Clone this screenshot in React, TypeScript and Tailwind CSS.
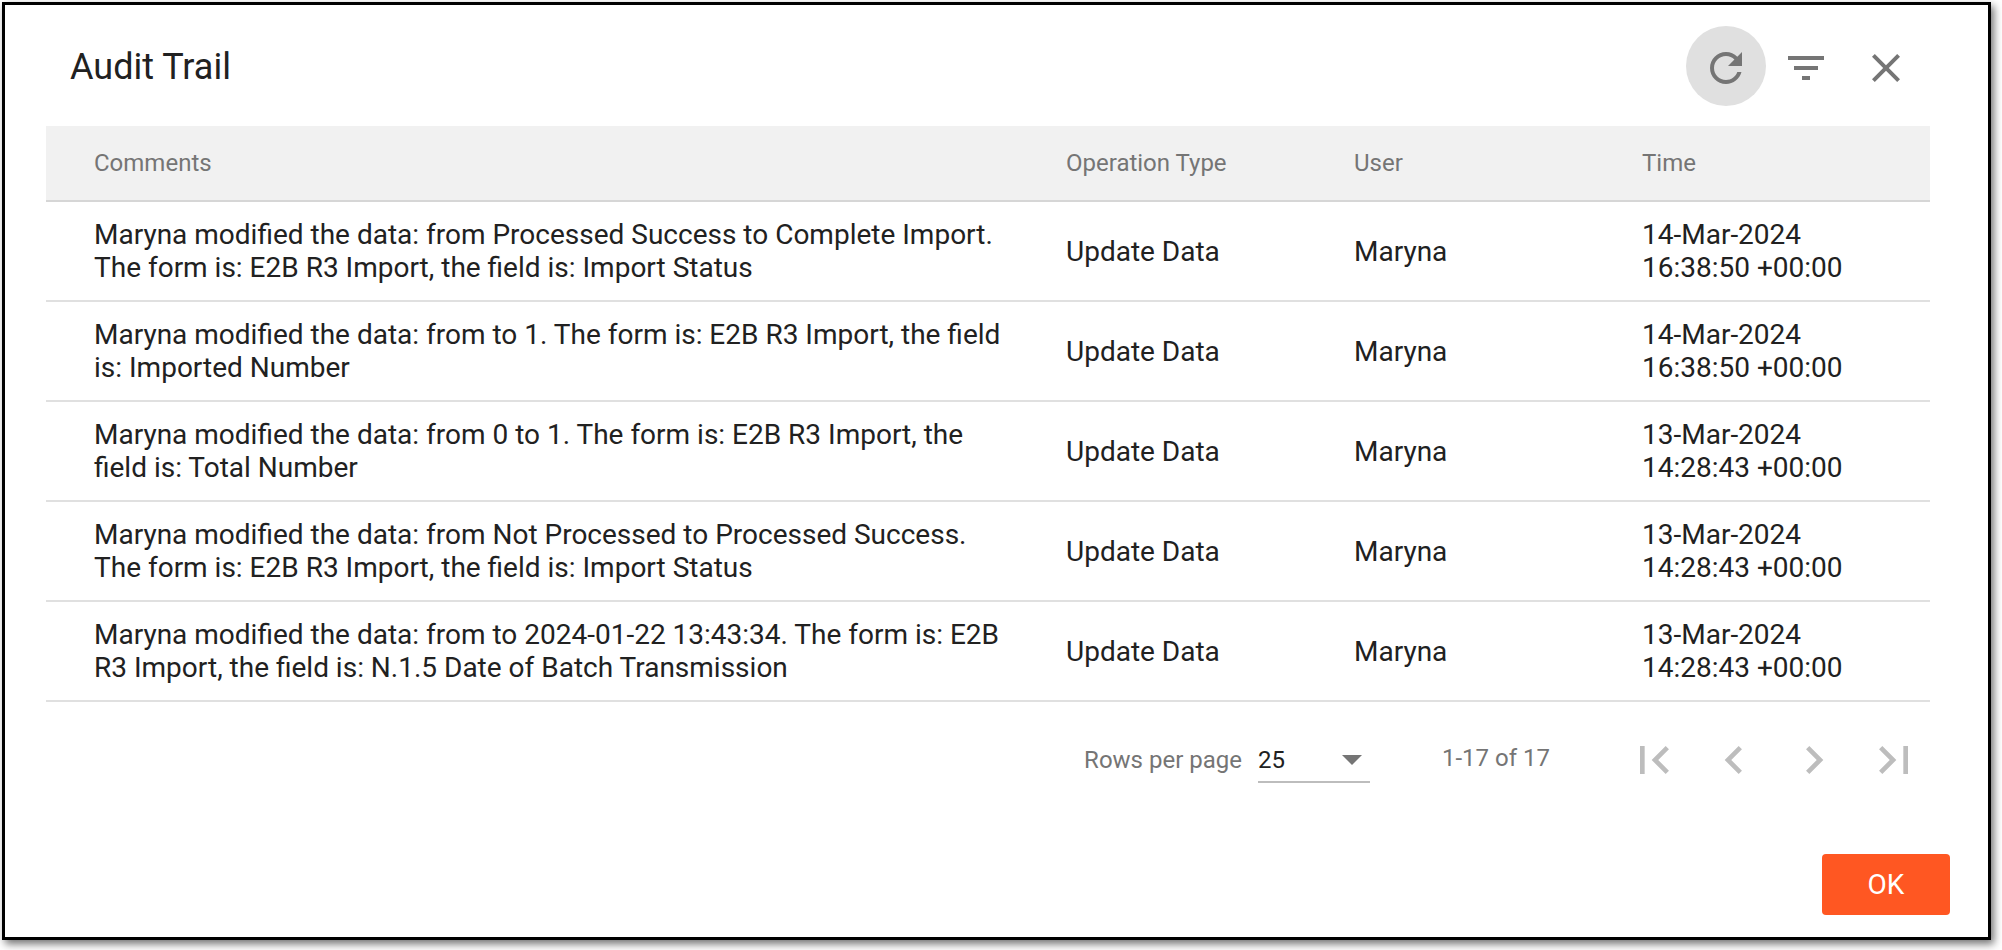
const rows = [
  {
    comment: "Maryna modified the data: from Processed Success to Complete Import. The form is: E2B R3 Import, the field is: Import Status",
    date: "14-Mar-2024",
    time: "16:38:50 +00:00",
  },
  {
    comment: "Maryna modified the data: from to 1. The form is: E2B R3 Import, the field is: Imported Number",
    date: "14-Mar-2024",
    time: "16:38:50 +00:00",
  },
  {
    comment: "Maryna modified the data: from 0 to 1. The form is: E2B R3 Import, the field is: Total Number",
    date: "13-Mar-2024",
    time: "14:28:43 +00:00",
  },
  {
    comment: "Maryna modified the data: from Not Processed to Processed Success. The form is: E2B R3 Import, the field is: Import Status",
    date: "13-Mar-2024",
    time: "14:28:43 +00:00",
  },
  {
    comment: "Maryna modified the data: from to 2024-01-22 13:43:34. The form is: E2B R3 Import, the field is: N.1.5 Date of Batch Transmission",
    date: "13-Mar-2024",
    time: "14:28:43 +00:00",
  },
];

const Icon = ({ d, size, className }: { d: string; size: number; className?: string }) => (
  <svg width={size} height={size} viewBox="0 0 24 24" fill="currentColor" className={className}>
    <path d={d} />
  </svg>
);

const pagerIcons = [
  "M18.41 16.59L13.82 12l4.59-4.59L17 6l-6 6 6 6zM6 6h2v12H6z",
  "M15.41 7.41L14 6l-6 6 6 6 1.41-1.41L10.83 12z",
  "M10 6L8.59 7.41 13.17 12l-4.58 4.59L10 18l6-6z",
  "M5.59 7.41L10.18 12l-4.59 4.59L7 18l6-6-6-6zM16 6h2v12h-2z",
];

export default function App() {
  return (
    <div className="h-[950px] w-[2002px] bg-white pl-[2px] pt-[2px] font-['Roboto',sans-serif]">
      <div className="flex h-[938px] w-[1989px] flex-col border-[3px] border-black bg-white shadow-[3px_4px_8px_rgba(0,0,0,0.55)]">
        <div className="flex h-[121px] items-start justify-between pl-[65px] pr-[62px]">
          <h1 className="pt-[39px] text-[36px] leading-[46px] font-normal text-[#212121]">Audit Trail</h1>
          <div className="flex pt-[21px] text-[#757575]">
            <button className="flex h-[80px] w-[80px] items-center justify-center rounded-full bg-[#e0e0e0]">
              <Icon size={48} className="mt-[4px]" d="M17.65 6.35C16.2 4.9 14.21 4 12 4c-4.42 0-7.99 3.58-7.99 8s3.57 8 7.99 8c3.73 0 6.84-2.55 7.73-6h-2.08c-.82 2.33-3.04 4-5.65 4-3.31 0-6-2.69-6-6s2.69-6 6-6c1.66 0 3.14.69 4.22 1.78L13 11h7V4l-2.35 2.35z" />
            </button>
            <button className="flex h-[80px] w-[80px] items-center justify-center">
              <Icon size={48} className="mt-[4px]" d="M10 18h4v-2h-4v2zM3 6v2h18V6H3zm3 7h12v-2H6v2z" />
            </button>
            <button className="flex h-[80px] w-[80px] items-center justify-center">
              <Icon size={48} className="mt-[4px]" d="M19 6.41L17.59 5 12 10.59 6.41 5 5 6.41 10.59 12 5 17.59 6.41 19 12 13.41 17.59 19 19 17.59 13.41 12z" />
            </button>
          </div>
        </div>

        <div className="ml-[41px] w-[1884px]">
          <div className="grid h-[76px] grid-cols-[972px_288px_288px_1fr] items-center border-b-2 border-[#d6d6d6] bg-[#f1f1f1] pl-[48px] text-[24px] text-[#757575]">
            <div>Comments</div>
            <div>Operation Type</div>
            <div>User</div>
            <div>Time</div>
          </div>
          {rows.map((row, i) => (
            <div
              key={i}
              className="grid h-[100px] grid-cols-[972px_288px_288px_1fr] items-center border-b-2 border-[#e0e0e0] pl-[48px] text-[28px] leading-[33px] text-[#212121]"
            >
              <div className="w-[915px]">{row.comment}</div>
              <div>Update Data</div>
              <div>Maryna</div>
              <div>
                {row.date}
                <br />
                {row.time}
              </div>
            </div>
          ))}
        </div>

        <div className="ml-[41px] mt-[16px] flex h-[80px] w-[1888px] items-center justify-end">
          <span className="pt-[3px] text-[24px] text-[#757575]">Rows per page</span>
          <div className="ml-[16px] flex h-[50px] w-[112px] items-center justify-between border-b-2 border-[#bdbdbd] pt-[6px] text-[24px] text-[#212121]">
            <span>25</span>
            <span className="mr-[8px] h-0 w-0 border-x-[10px] border-t-[10px] border-x-transparent border-t-[#757575]" />
          </div>
          <span className="ml-[72px] mr-[64px] text-[24px] text-[#757575]">1-17 of 17</span>
          {pagerIcons.map((d) => (
            <button key={d} className="flex h-[80px] w-[80px] items-center justify-center pt-[3px] text-[#bdbdbd]">
              <Icon size={56} d={d} />
            </button>
          ))}
        </div>

        <div className="mt-[56px] flex justify-end pr-[38px]">
          <button className="h-[61px] w-[128px] rounded-[4px] bg-[#ff5722] text-[28px] text-white">OK</button>
        </div>
      </div>
    </div>
  );
}
